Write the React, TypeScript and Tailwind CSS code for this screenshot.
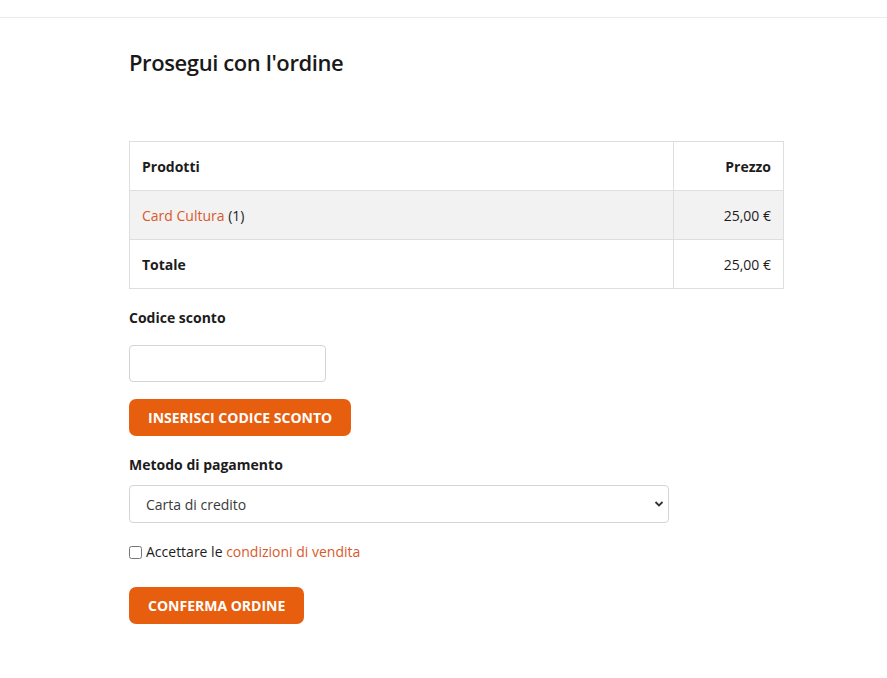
import { useState } from "react";

export default function App() {
  const [accepted, setAccepted] = useState(false);

  return (
    <div className="min-h-[678px] bg-white font-['Open_Sans',sans-serif] text-[#1c1c1c]">
      <div className="h-[18px] border-b border-[#e8ecee]" />
      <main className="ml-[129px] w-[655px] pt-[27px]">
        <h1 className="text-[22px] font-semibold leading-[34px] tracking-[-0.4px] text-[#191919]">
          Prosegui con l'ordine
        </h1>

        <table className="mt-[62px] w-full border-collapse text-[14px]">
          <thead>
            <tr className="h-[49px]">
              <th className="border border-[#dedede] px-3 text-left font-bold">Prodotti</th>
              <th className="w-[110px] border border-[#dedede] px-3 text-right font-bold">Prezzo</th>
            </tr>
          </thead>
          <tbody>
            <tr className="h-[49px] bg-[#f2f2f2]">
              <td className="border border-[#dedede] px-3">
                <a href="#" className="text-[#d9592c]">Card Cultura</a> (1)
              </td>
              <td className="border border-[#dedede] px-3 text-right">25,00 €</td>
            </tr>
            <tr className="h-[49px]">
              <td className="border border-[#dedede] px-3 font-bold">Totale</td>
              <td className="border border-[#dedede] px-3 text-right">25,00 €</td>
            </tr>
          </tbody>
        </table>

        <label className="mt-[19px] block text-[14px] font-bold leading-[20px]">Codice sconto</label>
        <input
          type="text"
          className="mt-[17px] block h-[37px] w-[197px] rounded-[4px] border border-[#d4d4d4] px-3 text-[14px]"
        />
        <button className="mt-[17px] block h-[37px] rounded-[7px] bg-[#e85e0f] px-[19px] text-[14px] font-bold text-white">
          INSERISCI CODICE SCONTO
        </button>

        <label className="mt-[19px] block text-[14px] font-bold leading-[20px]">Metodo di pagamento</label>
        <div className="relative mt-[10px] w-[540px]">
          <select className="block h-[38px] w-full appearance-none rounded-[4px] border border-[#d4d4d4] bg-white px-4 text-[14px] text-[#3a3a3a]">
            <option>Carta di credito</option>
          </select>
          <svg
            className="pointer-events-none absolute right-[5px] top-[15px]"
            width="10"
            height="8"
            viewBox="0 0 10 8"
          >
            <path d="M1.5 2 L5 5.5 L8.5 2" fill="none" stroke="#333" strokeWidth="1.8" />
          </svg>
        </div>

        <label className="mt-[19px] flex items-center gap-[4px] text-[14px] leading-[20px]">
          <input
            type="checkbox"
            checked={accepted}
            onChange={(e) => setAccepted(e.target.checked)}
            className="h-[13px] w-[13px]"
          />
          <span>
            Accettare le <a href="#" className="text-[#d9592c]">condizioni di vendita</a>
          </span>
        </label>

        <button className="mt-[25px] block h-[37px] rounded-[7px] bg-[#e85e0f] px-[19px] text-[14px] font-bold text-white">
          CONFERMA ORDINE
        </button>
      </main>
    </div>
  );
}
